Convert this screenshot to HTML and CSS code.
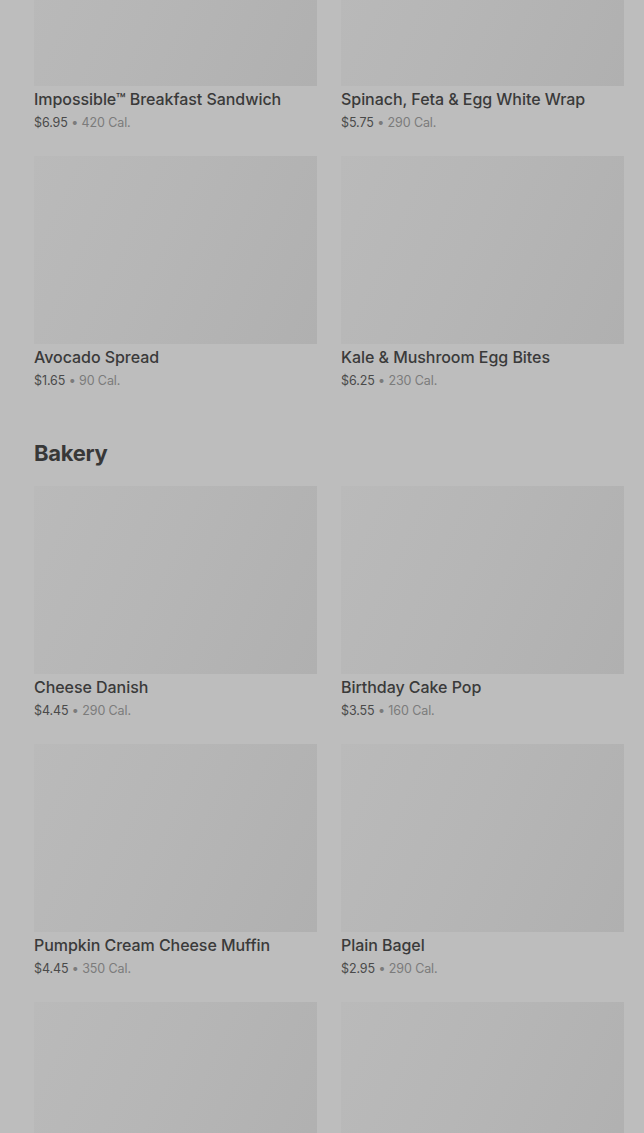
FILE: index.html
```html
<!DOCTYPE html>
<html lang="en">
<head>
<meta charset="utf-8">
<title>Menu</title>
<link rel="stylesheet" href="styles.css">
</head>
<body>
<main class="page">
  <section class="section">
    <div class="grid">
      <div class="card"><div class="thumb"></div><div class="name">Impossible™ Breakfast Sandwich</div><div class="meta"><span class="price">$6.95</span> • 420 Cal.</div></div>
      <div class="card"><div class="thumb"></div><div class="name">Spinach, Feta &amp; Egg White Wrap</div><div class="meta"><span class="price">$5.75</span> • 290 Cal.</div></div>
      <div class="card"><div class="thumb"></div><div class="name">Avocado Spread</div><div class="meta"><span class="price">$1.65</span> • 90 Cal.</div></div>
      <div class="card"><div class="thumb"></div><div class="name">Kale &amp; Mushroom Egg Bites</div><div class="meta"><span class="price">$6.25</span> • 230 Cal.</div></div>
    </div>
  </section>
  <section class="section">
    <h2 class="heading">Bakery</h2>
    <div class="grid">
      <div class="card"><div class="thumb"></div><div class="name">Cheese Danish</div><div class="meta"><span class="price">$4.45</span> • 290 Cal.</div></div>
      <div class="card"><div class="thumb"></div><div class="name">Birthday Cake Pop</div><div class="meta"><span class="price">$3.55</span> • 160 Cal.</div></div>
      <div class="card"><div class="thumb"></div><div class="name">Pumpkin Cream Cheese Muffin</div><div class="meta"><span class="price">$4.45</span> • 350 Cal.</div></div>
      <div class="card"><div class="thumb"></div><div class="name">Plain Bagel</div><div class="meta"><span class="price">$2.95</span> • 290 Cal.</div></div>
      <div class="card"><div class="thumb"></div><div class="name">&nbsp;</div><div class="meta">&nbsp;</div></div>
      <div class="card"><div class="thumb"></div><div class="name">&nbsp;</div><div class="meta">&nbsp;</div></div>
    </div>
  </section>
</main>
</body>
</html>
```

FILE: styles.css
```css
html, body {
  margin: 0;
  padding: 0;
  background: #bdbdbd;
  overflow: hidden;
}
body {
  font-family: Inter, "Liberation Sans", sans-serif;
  color: #3b3b3b;
}
.page {
  margin-top: -102px;
  padding: 0 20px 0 34px;
}
.grid {
  display: grid;
  grid-template-columns: 283px 283px;
  column-gap: 24px;
  row-gap: 24px;
}
.card {
  height: 234px;
  overflow: hidden;
}
.thumb {
  height: 188px;
  background: linear-gradient(115deg, #bababa 0%, #b6b6b6 45%, #b0b0b0 100%);
}
.name {
  margin-top: 2px;
  height: 22px;
  font-size: 16px;
  line-height: 22px;
  font-weight: 500;
  color: #3a3a3a;
  letter-spacing: -0.05px;
  white-space: nowrap;
}
.meta {
  margin-top: 3px;
  height: 20px;
  font-size: 12.5px;
  line-height: 20px;
  color: #7b7b7b;
  letter-spacing: -0.1px;
  white-space: nowrap;
}
.price {
  color: #4a4a4a;
}
.heading {
  margin: 47px 0 17px;
  height: 32px;
  font-size: 22px;
  line-height: 32px;
  font-weight: 700;
  color: #383838;
  letter-spacing: -0.3px;
}
```
